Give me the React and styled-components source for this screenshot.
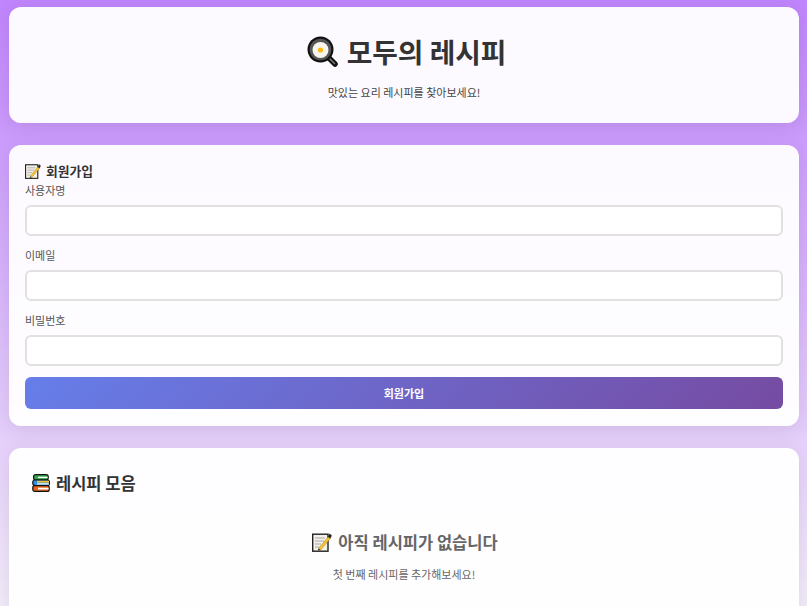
import React from 'react';
import styled, { createGlobalStyle } from 'styled-components';

const Global = createGlobalStyle`
  * { box-sizing: border-box; }
  html, body { margin: 0; padding: 0; height: 606px; overflow: hidden; }
  body {
    font-family: "Noto Sans CJK KR", sans-serif;
    background: linear-gradient(180deg, #c084fc 0%, #f3ecfa 100%);
    color: #333;
  }
`;
const Page = styled.div`
  padding: 7px 8px 0 9px;
  display: flex;
  flex-direction: column;
  gap: 22px;
`;
const Card = styled.section`
  background: rgba(255, 255, 255, 0.95);
  border-radius: 12px;
  box-shadow: 0 4px 20px rgba(0, 0, 0, 0.09);
`;
const Header = styled(Card)`
  height: 116px;
  padding-top: 24px;
  text-align: center;
`;
const Title = styled.h1`
  margin: 0;
  padding-left: 5px;
  font-size: 27.8px;
  line-height: 40px;
  font-weight: 700;
  color: #333;
  display: flex;
  justify-content: center;
  align-items: center;
  gap: 8px;
`;
const Subtitle = styled.p`
  margin: 13px 0 0;
  font-size: 11px;
  line-height: 17px;
  color: #444;
`;
const Form = styled(Card)`
  height: 281px;
  padding: 16px 16px 0;
`;
const FormTitle = styled.h3`
  margin: 0;
  font-size: 12.8px;
  line-height: 20px;
  font-weight: 700;
  display: flex;
  align-items: center;
  gap: 5px;
`;
const Fields = styled.div`
  margin-top: 1px;
  display: flex;
  flex-direction: column;
  gap: 11px;
`;
const Label = styled.label`
  display: block;
  font-size: 11px;
  line-height: 16px;
  color: #555;
  margin-bottom: 7px;
`;
const Input = styled.input`
  display: block;
  width: 100%;
  height: 31px;
  border: 2px solid #e1e1e1;
  border-radius: 6px;
  background: #fff;
  outline: none;
`;
const Submit = styled.button`
  display: block;
  width: 100%;
  height: 32px;
  margin-top: 11px;
  border: 0;
  border-radius: 6px;
  background: linear-gradient(135deg, #667eea 0%, #764ba2 100%);
  color: #fff;
  font: 700 11px "Noto Sans CJK KR", sans-serif;
`;
const Recipes = styled(Card)`
  height: 200px;
  padding: 23px 23px 0;
`;
const RecipesTitle = styled.h2`
  margin: 0;
  font-size: 16.5px;
  line-height: 24px;
  font-weight: 700;
  color: #333;
  display: flex;
  align-items: center;
  gap: 6px;
`;
const Empty = styled.div`
  margin-top: 35px;
  text-align: center;
  color: #666;
`;
const EmptyTitle = styled.h3`
  margin: 0;
  padding-left: 2px;
  font-size: 16.5px;
  line-height: 24px;
  font-weight: 700;
  display: flex;
  justify-content: center;
  align-items: center;
  gap: 6px;
`;
const EmptyText = styled.p`
  margin: 12px 0 0;
  font-size: 11px;
  line-height: 16px;
`;

const PanIcon = () => (
  <svg width="32" height="31" viewBox="0 0 32 31" aria-hidden="true">
    <path d="M21 21l7 7" stroke="#111" strokeWidth="5.5" strokeLinecap="round" />
    <path d="M22 22l5.5 5.5" stroke="#777" strokeWidth="1.6" strokeLinecap="round" />
    <circle cx="13.5" cy="13.5" r="13" fill="#111" />
    <circle cx="13.5" cy="13.5" r="10.8" fill="#555" />
    <circle cx="13.5" cy="14" r="8" fill="#f7f5ee" />
    <circle cx="13.5" cy="14" r="2.6" fill="#fdb813" />
  </svg>
);

const MemoIcon = ({ size }) => (
  <svg width={size} height={size} viewBox="0 0 20 20" aria-hidden="true">
    <rect x="0.7" y="2.2" width="15.3" height="17" fill="#f4f1e8" stroke="#222" strokeWidth="1.4" />
    <path d="M3 6h10M3 9h9M3 12h6M3 15h4" stroke="#a8a8a8" strokeWidth="1.1" />
    <path d="M6.5 16.5L16.5 4.5l2 1.8L8.5 18z" fill="#f8c234" stroke="#a87a10" strokeWidth="0.5" />
    <path d="M16 5l1.6-3.5 2.2 2-1.4 3z" fill="#222" />
    <path d="M6.5 16.5L6 18.5l2.5-.5z" fill="#222" />
  </svg>
);

const BooksIcon = () => (
  <svg width="18" height="18" viewBox="0 0 18 18" aria-hidden="true">
    <rect x="1.6" y="0.6" width="14.6" height="5.6" rx="2" fill="#2fa84a" stroke="#111" strokeWidth="1.2" />
    <path d="M6 3.4h9.6" stroke="#fff" strokeWidth="1.4" />
    <rect x="0.8" y="6" width="16.6" height="5.6" rx="2" fill="#2f8fe0" stroke="#111" strokeWidth="1.2" />
    <path d="M5 7.7h12" stroke="#f2c230" strokeWidth="1.8" />
    <path d="M5 9.9h12" stroke="#fff" strokeWidth="1.2" />
    <rect x="0.8" y="11.6" width="16.4" height="5.8" rx="2" fill="#e8641e" stroke="#111" strokeWidth="1.2" />
    <path d="M6 14.6h10.6" stroke="#fff" strokeWidth="1.8" />
  </svg>
);

export default function App() {
  return (
    <>
      <Global />
      <Page>
        <Header>
          <Title><PanIcon />모두의 레시피</Title>
          <Subtitle>맛있는 요리 레시피를 찾아보세요!</Subtitle>
        </Header>
        <Form>
          <FormTitle><MemoIcon size={16} />회원가입</FormTitle>
          <Fields>
            <div><Label>사용자명</Label><Input /></div>
            <div><Label>이메일</Label><Input /></div>
            <div><Label>비밀번호</Label><Input /></div>
          </Fields>
          <Submit>회원가입</Submit>
        </Form>
        <Recipes>
          <RecipesTitle><BooksIcon />레시피 모음</RecipesTitle>
          <Empty>
            <EmptyTitle><MemoIcon size={20} />아직 레시피가 없습니다</EmptyTitle>
            <EmptyText>첫 번째 레시피를 추가해보세요!</EmptyText>
          </Empty>
        </Recipes>
      </Page>
    </>
  );
}
